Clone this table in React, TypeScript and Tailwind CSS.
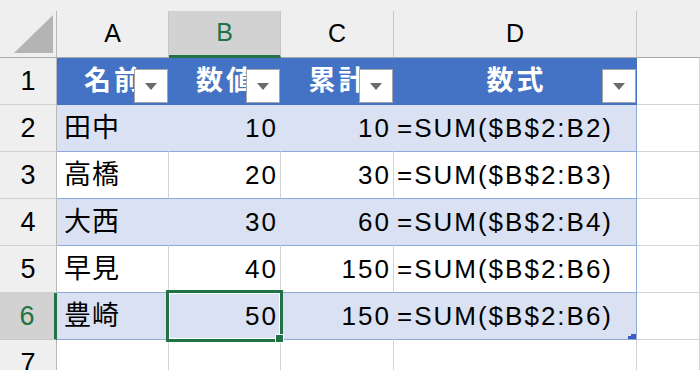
import React from "react";

const GRID = "grid grid-cols-[57px_112px_112px_113px_243px_1fr]";

type Row = { n: number; name: string; value: number; total: number; formula: string };

const rows: Row[] = [
  { n: 2, name: "田中", value: 10, total: 10, formula: "=SUM($B$2:B2)" },
  { n: 3, name: "高橋", value: 20, total: 30, formula: "=SUM($B$2:B3)" },
  { n: 4, name: "大西", value: 30, total: 60, formula: "=SUM($B$2:B4)" },
  { n: 5, name: "早見", value: 40, total: 150, formula: "=SUM($B$2:B6)" },
  { n: 6, name: "豊崎", value: 50, total: 150, formula: "=SUM($B$2:B6)" },
];

const FilterButton = () => (
  <div className="absolute right-0 top-[11px] w-[34px] h-[34px] bg-white border border-[#a6a6a6] flex items-center justify-center">
    <svg width="12" height="7" viewBox="0 0 12 7">
      <polygon points="0,0 12,0 6,7" fill="#6b6b6b" />
    </svg>
  </div>
);

const RowHead = ({ n, active }: { n: number; active?: boolean }) => (
  <div
    className={
      active
        ? "flex items-center justify-center bg-[#d2d2d2] text-[#217346] text-[27px] border-b border-b-[#c8c8c8] border-r-[3px] border-r-[#217346]"
        : "flex items-center justify-center bg-[#efefef] text-black text-[27px] border-b border-b-[#d0d0d0] border-r border-r-[#b9b9b9]"
    }
  >
    {n}
  </div>
);

const HeadCell = ({ label }: { label: string }) => (
  <div className="relative flex items-center justify-center bg-[#4472c4] border-r border-b border-[#4472c4] text-white font-bold text-[27px] tracking-[3px] pl-[3px] overflow-hidden">
    {label}
    <FilterButton />
  </div>
);

export default function App() {
  return (
    <div className="w-[700px] h-[370px] overflow-hidden bg-white font-['Liberation_Sans','Noto_Sans_CJK_JP',sans-serif]">
      {/* column letters */}
      <div className={`${GRID} h-[58px] pt-[11px] bg-[#efefef]`}>
        <div className="h-[47px] border-r border-b border-r-[#b9b9b9] border-b-[#a9a9a9]">
          <svg width="56" height="46" viewBox="0 0 56 46">
            <polygon points="53,4 53,42 14,42" fill="#b4b4b4" />
          </svg>
        </div>
        <div className="h-[47px] flex items-center justify-center text-[25px] text-black border-r border-b border-r-[#c6c6c6] border-b-[#a9a9a9]">A</div>
        <div className="h-[47px] flex items-center justify-center text-[25px] text-[#217346] bg-[#d2d2d2] border-r border-r-[#c6c6c6] border-b-[3px] border-b-[#217346]">B</div>
        <div className="h-[47px] flex items-center justify-center text-[25px] text-black border-r border-b border-r-[#c6c6c6] border-b-[#a9a9a9]">C</div>
        <div className="h-[47px] flex items-center justify-center text-[25px] text-black border-r border-b border-r-[#c6c6c6] border-b-[#a9a9a9]">D</div>
        <div className="h-[47px] border-b border-b-[#a9a9a9]" />
      </div>

      {/* table header */}
      <div className={`${GRID} h-[47px]`}>
        <RowHead n={1} />
        <HeadCell label="名前" />
        <HeadCell label="数値" />
        <HeadCell label="累計" />
        <HeadCell label="数式" />
        <div className="border-r border-b border-[#d4d4d4]" />
      </div>

      {rows.map((r) => {
        const band = r.n % 2 === 0;
        const fill = band
          ? "bg-[#d9e1f2] border-r-[#d9e1f2]"
          : "bg-white border-r-[#d4d4d4]";
        const selected = r.n === 6;
        return (
          <div key={r.n} className={`${GRID} h-[47px]`}>
            <RowHead n={r.n} active={selected} />
            <div className={`${fill} flex items-center pl-[7px] border-r border-b border-b-[#8ea9db] text-[27px] tracking-[1px] text-black`}>
              {r.name}
            </div>
            <div className={`${fill} relative flex items-center justify-end pr-[2px] border-r border-b border-b-[#8ea9db] text-[26px] tracking-[2px] text-black`}>
              {r.value}
              {selected && (
                <>
                  <div className="absolute -left-[3px] -top-[3px] -right-[3px] -bottom-[3px] border-[3px] border-[#217346] z-10">
                    <div className="w-full h-full border border-white" />
                  </div>
                  <div className="absolute -right-[4px] -bottom-[4px] w-[9px] h-[9px] bg-[#217346] border border-white z-20" />
                </>
              )}
            </div>
            <div className={`${fill} flex items-center justify-end pr-[2px] border-r border-b border-b-[#8ea9db] text-[26px] tracking-[2px] text-black`}>
              {r.total}
            </div>
            <div
              className={`${band ? "bg-[#d9e1f2]" : "bg-white"} relative flex items-center pl-[3px] border-r border-b border-r-[#8ea9db] border-b-[#8ea9db] text-[26px] tracking-[2px] text-black`}
            >
              {r.formula}
              {selected && (
                <svg className="absolute right-0 bottom-0" width="8" height="5" viewBox="0 0 8 5">
                  <polygon points="3,0 8,0 8,5 0,5 0,2 3,2" fill="#3c5bc4" />
                </svg>
              )}
            </div>
            <div className="border-r border-b border-[#d4d4d4]" />
          </div>
        );
      })}

      {/* empty row below the table */}
      <div className={`${GRID} h-[47px]`}>
        <RowHead n={7} />
        <div className="border-r border-b border-[#d4d4d4]" />
        <div className="border-r border-b border-[#d4d4d4]" />
        <div className="border-r border-b border-[#d4d4d4]" />
        <div className="border-r border-b border-[#d4d4d4]" />
        <div className="border-r border-b border-[#d4d4d4]" />
      </div>
    </div>
  );
}
